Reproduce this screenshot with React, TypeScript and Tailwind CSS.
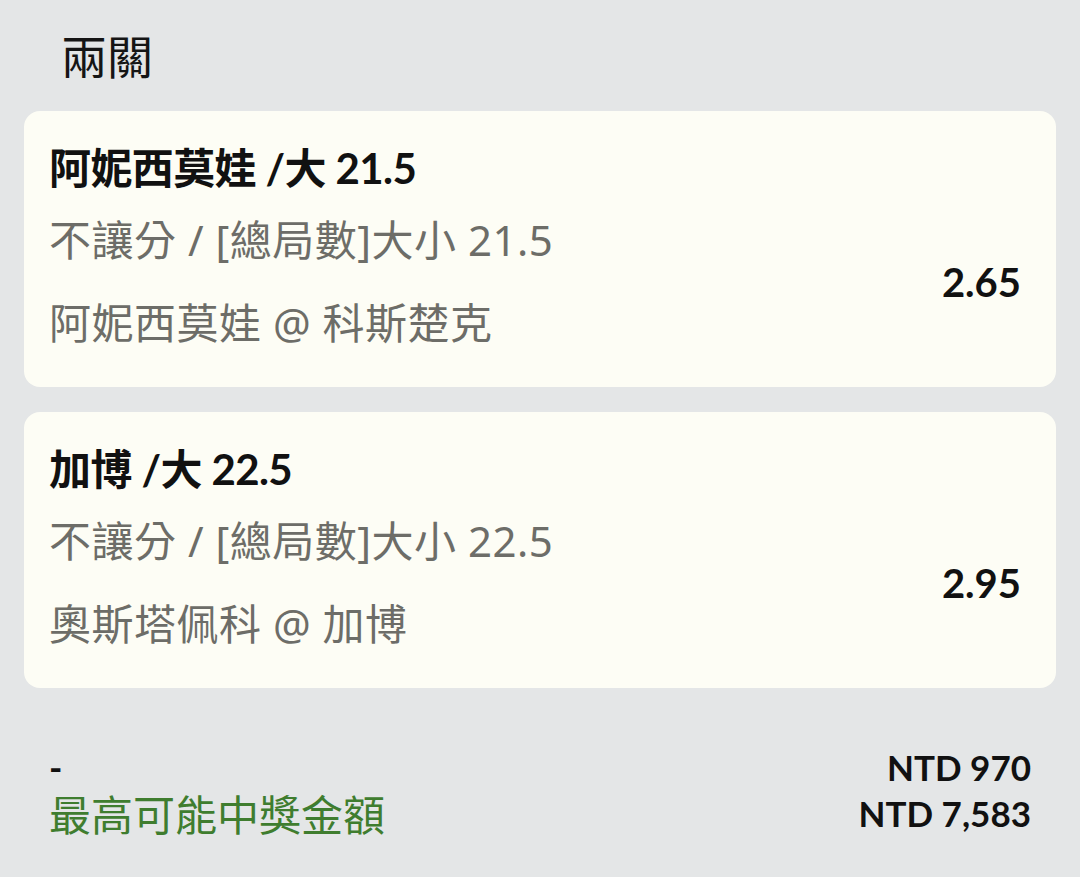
import React from "react";

interface Leg {
  title: string;
  market: string;
  match: string;
  odds: string;
}

const LEGS: Leg[] = [
  {
    title: "阿妮西莫娃 /大 21.5",
    market: "不讓分 / [總局數]大小 21.5",
    match: "阿妮西莫娃 @ 科斯楚克",
    odds: "2.65",
  },
  {
    title: "加博 /大 22.5",
    market: "不讓分 / [總局數]大小 22.5",
    match: "奧斯塔佩科 @ 加博",
    odds: "2.95",
  },
];

const FONT = "font-['Lato','Noto_Sans_CJK_TC',sans-serif]";
const CJK = "font-['Noto_Sans_CJK_TC',sans-serif]";
const GRAY_FONT = "font-['Noto_Sans','Noto_Sans_CJK_TC',sans-serif]";

function LegCard({ leg }: { leg: Leg }) {
  return (
    <div className="h-[276px] rounded-[16px] bg-[#fdfdf5] pl-[25px] pr-[35px] pt-[29px]">
      <div className="text-[42px] font-bold leading-[56px] text-[#111] tracking-[-0.6px]">
        {leg.title}
      </div>
      <div className="mt-[16px] flex items-center justify-between">
        <div className={`text-[42px] leading-[56px] tracking-[0.5px] text-[#6d6d68] ${GRAY_FONT}`}>
          <div>{leg.market}</div>
          <div className="mt-[27px]">{leg.match}</div>
        </div>
        <div className="text-[40px] font-bold leading-[56px] text-[#111]">
          {leg.odds}
        </div>
      </div>
    </div>
  );
}

export default function App() {
  return (
    <div className={`h-[877px] w-[1080px] overflow-hidden bg-[#e4e6e7] ${FONT}`}>
      <div className={`pl-[61px] pt-[26px] text-[46px] leading-[56px] text-[#151515] ${CJK}`}>
        兩關
      </div>
      <div className="mt-[29px] flex flex-col gap-[25px] px-[24px]">
        {LEGS.map((leg) => (
          <LegCard key={leg.odds} leg={leg} />
        ))}
      </div>
      <div className="mt-[56px] flex flex-col pl-[49px] pr-[49px]">
        <div className="flex h-[46px] items-center justify-between">
          <div className="text-[36px] font-bold leading-[40px] text-[#111]">-</div>
          <div className="text-[35px] font-bold leading-[40px] text-[#111]">NTD 970</div>
        </div>
        <div className="flex h-[46px] items-center justify-between">
          <div className={`text-[42px] leading-[46px] text-[#3f7d2f] ${CJK}`}>最高可能中獎金額</div>
          <div className="text-[35px] font-bold leading-[40px] text-[#111]">NTD 7,583</div>
        </div>
      </div>
    </div>
  );
}
